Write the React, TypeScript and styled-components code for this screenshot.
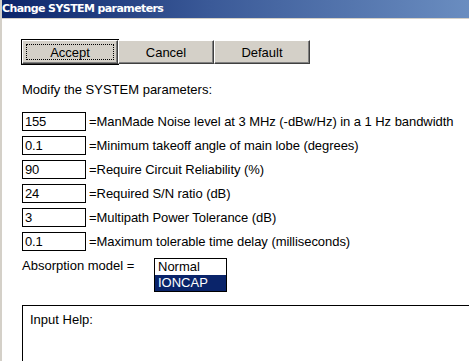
import React from 'react';
import styled, { createGlobalStyle } from 'styled-components';

const Global = createGlobalStyle`
  html, body {
    margin: 0;
    padding: 0;
    background: #fff;
    overflow: hidden;
  }
  body {
    font-family: "Liberation Sans", Arial, sans-serif;
    font-size: 13px;
    color: #000;
  }
`;

const Window = styled.div`
  width: 469px;
  height: 361px;
  box-sizing: border-box;
  border-left: 2px solid #d4d0c8;
  background: #fff;
  overflow: hidden;
`;

const TitleBar = styled.div`
  height: 18px;
  margin-left: -2px;
  border-bottom: 1px solid #d4d0c8;
  background: linear-gradient(to right, #0a246a 0%, #3b5a98 45%, #6a8dc0 100%);
  color: #fff;
  font-family: "DejaVu Sans", Verdana, sans-serif;
  font-weight: bold;
  font-size: 11px;
  line-height: 18px;
  padding-left: 2px;
  letter-spacing: -0.6px;
`;

const Body = styled.div`
  padding-left: 20px;
  padding-top: 21px;
`;

const ButtonRow = styled.div`
  display: flex;
`;

const Button = styled.button<{ $focused?: boolean }>`
  position: relative;
  width: 96px;
  height: 24px;
  margin: 0;
  padding: 0;
  background: #d4d0c8;
  font-family: "Liberation Sans", Arial, sans-serif;
  font-size: 13px;
  color: #000;
  border: 1px solid;
  border-color: #fff #404040 #404040 #fff;
  box-shadow: inset -1px -1px 0 #808080, inset 1px 1px 0 #d4d0c8;
  outline: ${({ $focused }) => ($focused ? '1px solid #000' : 'none')};
  outline-offset: 0;
  ${({ $focused }) =>
    $focused
      ? `
    &::after {
      content: '';
      position: absolute;
      left: 3px;
      top: 3px;
      right: 3px;
      bottom: 3px;
      border: 1px dotted #000;
    }
  `
      : ''}
`;

const Intro = styled.div`
  margin-top: 18px;
  height: 15px;
  line-height: 15px;
`;

const Fields = styled.div`
  margin-top: 15px;
  display: flex;
  flex-direction: column;
  gap: 5px;
`;

const FieldRow = styled.div`
  display: flex;
  align-items: center;
  height: 19px;
`;

const Box = styled.div`
  box-sizing: border-box;
  width: 64px;
  height: 19px;
  border: 1px solid #000;
  padding-left: 2px;
  line-height: 17px;
  font-family: "Liberation Sans", Arial, sans-serif;
  font-size: 13px;
  letter-spacing: -0.2px;
`;

const Label = styled.span`
  margin-left: 3px;
  white-space: nowrap;
  letter-spacing: -0.05px;
`;

const AbsorptionRow = styled.div`
  display: flex;
  align-items: flex-start;
  margin-top: 5px;
`;

const AbsorptionLabel = styled.span`
  width: 132px;
  padding-top: 2px;
  line-height: 15px;
`;

const ListBox = styled.div`
  box-sizing: border-box;
  width: 73px;
  border: 1px solid #000;
  display: flex;
  flex-direction: column;
  margin-top: 2px;
`;

const ListItem = styled.div<{ $selected?: boolean }>`
  height: 16px;
  line-height: 16px;
  padding-left: 3px;
  background: ${({ $selected }) => ($selected ? '#0a246a' : '#fff')};
  color: ${({ $selected }) => ($selected ? '#fff' : '#000')};
`;

const HelpBox = styled.div`
  margin-top: 13px;
  width: 470px;
  height: 80px;
  border: 1px solid #000;
  box-sizing: border-box;
  padding: 6px 0 0 7px;
  line-height: 15px;
`;

const fields = [
  { value: '155', label: '=ManMade Noise level at 3 MHz (-dBw/Hz) in a 1 Hz bandwidth' },
  { value: '0.1', label: '=Minimum takeoff angle of main lobe (degrees)' },
  { value: '90', label: '=Require Circuit Reliability (%)' },
  { value: '24', label: '=Required S/N ratio (dB)' },
  { value: '3', label: '=Multipath Power Tolerance (dB)' },
  { value: '0.1', label: '=Maximum tolerable time delay (milliseconds)' },
];

const App = () => {
  return (
    <>
      <Global />
      <Window>
        <TitleBar>Change SYSTEM parameters</TitleBar>
        <Body>
          <ButtonRow>
            <Button $focused>Accept</Button>
            <Button>Cancel</Button>
            <Button>Default</Button>
          </ButtonRow>

          <Intro>Modify the SYSTEM parameters:</Intro>

          <Fields>
            {fields.map((f, i) => (
              <FieldRow key={i}>
                <Box>{f.value}</Box>
                <Label>{f.label}</Label>
              </FieldRow>
            ))}
          </Fields>

          <AbsorptionRow>
            <AbsorptionLabel>Absorption model =</AbsorptionLabel>
            <ListBox>
              <ListItem>Normal</ListItem>
              <ListItem $selected>IONCAP</ListItem>
            </ListBox>
          </AbsorptionRow>

          <HelpBox>Input Help:</HelpBox>
        </Body>
      </Window>
    </>
  );
};

export default App;
